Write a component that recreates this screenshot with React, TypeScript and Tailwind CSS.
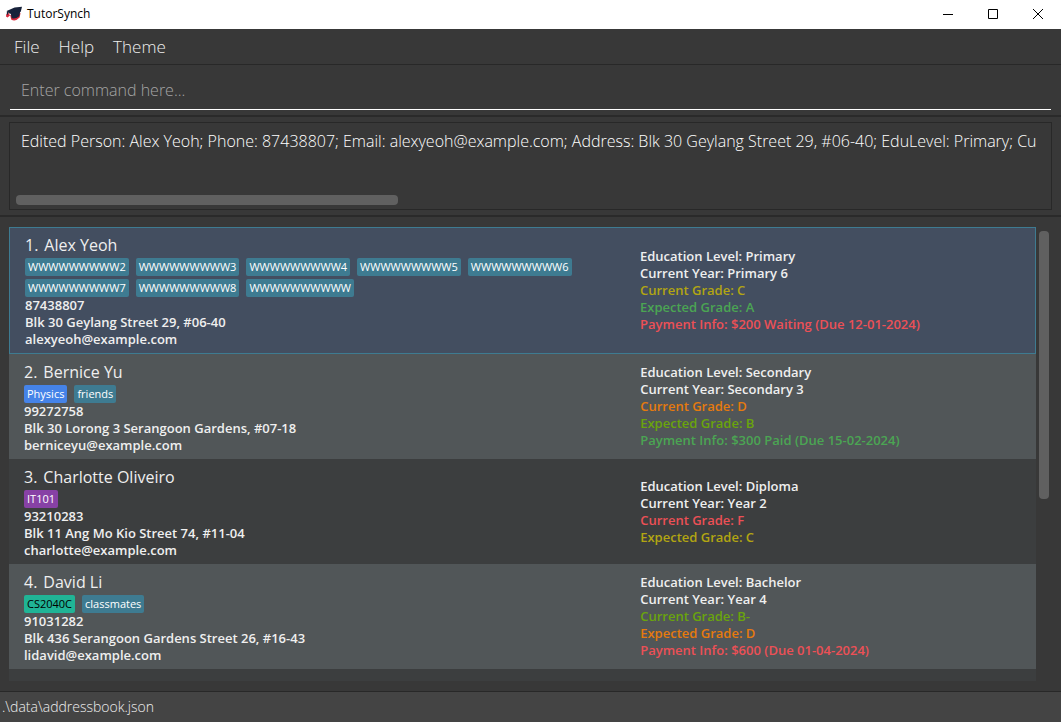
import React, { useState } from "react";
import clsx from "clsx";

interface Tag {
  label: string;
  style?: string;
}

interface Detail {
  text: string;
  color?: string;
}

interface Person {
  name: string;
  tags: Tag[];
  phone: string;
  address: string;
  email: string;
  details: Detail[];
}

const menus = ["File", "Help", "Theme"];

const persons: Person[] = [
  {
    name: "Alex Yeoh",
    tags: [
      { label: "WWWWWWWWW2" },
      { label: "WWWWWWWWW3" },
      { label: "WWWWWWWWW4" },
      { label: "WWWWWWWWW5" },
      { label: "WWWWWWWWW6" },
      { label: "WWWWWWWWW7" },
      { label: "WWWWWWWWW8" },
      { label: "WWWWWWWWWW" },
    ],
    phone: "87438807",
    address: "Blk 30 Geylang Street 29, #06-40",
    email: "alexyeoh@example.com",
    details: [
      { text: "Education Level: Primary" },
      { text: "Current Year: Primary 6" },
      { text: "Current Grade: C", color: "text-[#b2a512]" },
      { text: "Expected Grade: A", color: "text-[#4ba553]" },
      { text: "Payment Info: $200 Waiting (Due 12-01-2024)", color: "text-[#ec5056]" },
    ],
  },
  {
    name: "Bernice Yu",
    tags: [{ label: "Physics", style: "bg-[#4583e8] text-white" }, { label: "friends" }],
    phone: "99272758",
    address: "Blk 30 Lorong 3 Serangoon Gardens, #07-18",
    email: "berniceyu@example.com",
    details: [
      { text: "Education Level: Secondary" },
      { text: "Current Year: Secondary 3" },
      { text: "Current Grade: D", color: "text-[#e67a0d]" },
      { text: "Expected Grade: B", color: "text-[#6aa40c]" },
      { text: "Payment Info: $300 Paid (Due 15-02-2024)", color: "text-[#4ba553]" },
    ],
  },
  {
    name: "Charlotte Oliveiro",
    tags: [{ label: "IT101", style: "bg-[#8741a5] text-white" }],
    phone: "93210283",
    address: "Blk 11 Ang Mo Kio Street 74, #11-04",
    email: "charlotte@example.com",
    details: [
      { text: "Education Level: Diploma" },
      { text: "Current Year: Year 2" },
      { text: "Current Grade: F", color: "text-[#ec5056]" },
      { text: "Expected Grade: C", color: "text-[#b2a512]" },
    ],
  },
  {
    name: "David Li",
    tags: [{ label: "CS2040C", style: "bg-[#20b496] text-black" }, { label: "classmates" }],
    phone: "91031282",
    address: "Blk 436 Serangoon Gardens Street 26, #16-43",
    email: "lidavid@example.com",
    details: [
      { text: "Education Level: Bachelor" },
      { text: "Current Year: Year 4" },
      { text: "Current Grade: B-", color: "text-[#6aa40c]" },
      { text: "Expected Grade: D", color: "text-[#e67a0d]" },
      { text: "Payment Info: $600 (Due 01-04-2024)", color: "text-[#ec5056]" },
    ],
  },
];

function AppLogo() {
  return (
    <svg className="h-4 w-4" viewBox="0 0 16 16" aria-hidden="true">
      {/* red shadow under the cap and tassel */}
      <path d="M0.2 8.5 L2.2 6.5 L4 9.5 L1.5 11.5 L0 10.5 Z" fill="#d8283c" />
      <path d="M4.2 9 L14.5 7 L13.6 11.6 Q9.5 16 5.2 13.6 Z" fill="#d8283c" />
      {/* cap */}
      <path d="M0.6 5 L8.6 1.6 L16 0.8 L14.8 5.4 L9.8 9 L3.4 7.4 Z" fill="#17223a" />
      <path d="M4.6 6.5 L14.4 5 L13.2 10.2 Q9 13.8 5.6 12 Z" fill="#17223a" />
      <path d="M0.9 5.2 L2.2 6 L2 8.8 L0.8 8.6 Z" fill="#17223a" />
    </svg>
  );
}

function TitleBar() {
  return (
    <header className="flex h-[29px] shrink-0 items-center justify-between bg-white pl-1.5 text-black">
      <div className="flex items-center gap-[5px] pb-0.5">
        <AppLogo />
        <h1 className="text-xs">TutorSynch</h1>
      </div>
      <div className="flex h-full pb-0.5">
        <button aria-label="Minimize" className="flex w-[45px] items-center justify-center">
          <svg className="h-[10px] w-[10px]" viewBox="0 0 10 10" stroke="currentColor" fill="none">
            <path d="M0 5.5H10" />
          </svg>
        </button>
        <button aria-label="Maximize" className="flex w-[45px] items-center justify-center">
          <svg className="h-[10px] w-[10px]" viewBox="0 0 10 10" stroke="currentColor" fill="none">
            <path d="M0.5 0.5H9.5V9.5H0.5Z" />
          </svg>
        </button>
        <button aria-label="Close" className="flex w-[46px] items-center justify-center">
          <svg className="h-[10px] w-[10px]" viewBox="0 0 10 10" stroke="currentColor" fill="none">
            <path d="M0 0L10 10M10 0L0 10" />
          </svg>
        </button>
      </div>
    </header>
  );
}

function PersonCard({ person, index, selected, onSelect }: {
  person: Person;
  index: number;
  selected: boolean;
  onSelect: () => void;
}) {
  return (
    <li
      onClick={onSelect}
      className={clsx(
        "grid grid-cols-[3fr_2fr] items-center",
        selected && "border border-[#3e7b91] bg-[#434e60] pt-1 pb-[5px]",
        !selected && "py-[5px]",
        !selected && (index % 2 === 1 ? "bg-[#515658]" : "bg-[#3c3e3f]")
      )}
    >
      <div className="pl-[15px]">
        <h2 className="flex gap-1.5 text-base leading-[26px]">
          <span>{index + 1}.</span>
          <span>{person.name}</span>
        </h2>
        <ul className="flex flex-wrap gap-x-[7px] gap-y-[3px]">
          {person.tags.map((tag) => (
            <li
              key={tag.label}
              className={clsx("rounded-xs px-[3px] text-[11px] leading-[18px]", tag.style || "bg-[#3e7b91] text-white")}
            >
              {tag.label}
            </li>
          ))}
        </ul>
        <div className="text-[13px] leading-[17px] font-semibold">
          <p>{person.phone}</p>
          <p>{person.address}</p>
          <p>{person.email}</p>
        </div>
      </div>
      <div className="pl-[15px] text-[13px] leading-[17px] font-semibold">
        {person.details.map((detail) => (
          <p key={detail.text} className={detail.color}>
            {detail.text}
          </p>
        ))}
      </div>
    </li>
  );
}

export default function App() {
  const [command, setCommand] = useState("");
  const [selected, setSelected] = useState(0);

  return (
    <div className="flex h-screen flex-col overflow-hidden bg-[#383838] font-['Open_Sans','Noto_Sans',sans-serif] text-[#efefef]">
      <TitleBar />

      <nav className="flex h-9 shrink-0 items-center gap-[19px] border-b border-[#282828] px-3.5 text-[17px] font-light">
        {menus.map((menu) => (
          <button key={menu}>{menu}</button>
        ))}
      </nav>

      {/* Command box */}
      <div className="shrink-0 border-b-2 border-[#2a2a2a] px-2.5 pt-[5px] pb-[5px]">
        <input
          type="text"
          aria-label="Command"
          value={command}
          onChange={(e) => setCommand(e.target.value)}
          placeholder="Enter command here..."
          className="block h-10 w-full border-b border-white bg-transparent px-[11px] text-base font-light outline-none placeholder:text-[#a5a5a5]"
        />
      </div>

      {/* Result display */}
      <div className="shrink-0 border-b-2 border-[#2a2a2a] px-[9px] py-[5px]">
        <div className="flex h-[88px] flex-col justify-between border border-[#282828] pt-1.5 pr-0.5 pb-1 pl-1.5">
          <p className="overflow-hidden pl-[5px] text-base leading-6 font-light whitespace-nowrap text-white">
            Edited Person: Alex Yeoh; Phone: 87438807; Email: alexyeoh@example.com; Address: Blk 30 Geylang Street 29, #06-40; EduLevel: Primary; Cu
          </p>
          <div className="h-2.5 w-[37%] rounded-sm bg-[#606060]" />
        </div>
      </div>

      {/* Person list */}
      <main className="flex min-h-0 flex-1 gap-[3px] px-[9px] py-2.5">
        <ul className="min-w-0 flex-1 overflow-hidden bg-[#3c3e3f]">
          {persons.map((person, index) => (
            <PersonCard
              key={person.name}
              person={person}
              index={index}
              selected={selected === index}
              onSelect={() => setSelected(index)}
            />
          ))}
        </ul>
        <div className="mr-[3px] w-2.5 py-1">
          <div className="h-3/5 rounded-sm bg-[#606060]" />
        </div>
      </main>

      <footer className="h-[31px] shrink-0 border-t border-[#282828] bg-[#444444] px-0.5 text-sm leading-[30px] font-light">
        .\data\addressbook.json
      </footer>
    </div>
  );
}
